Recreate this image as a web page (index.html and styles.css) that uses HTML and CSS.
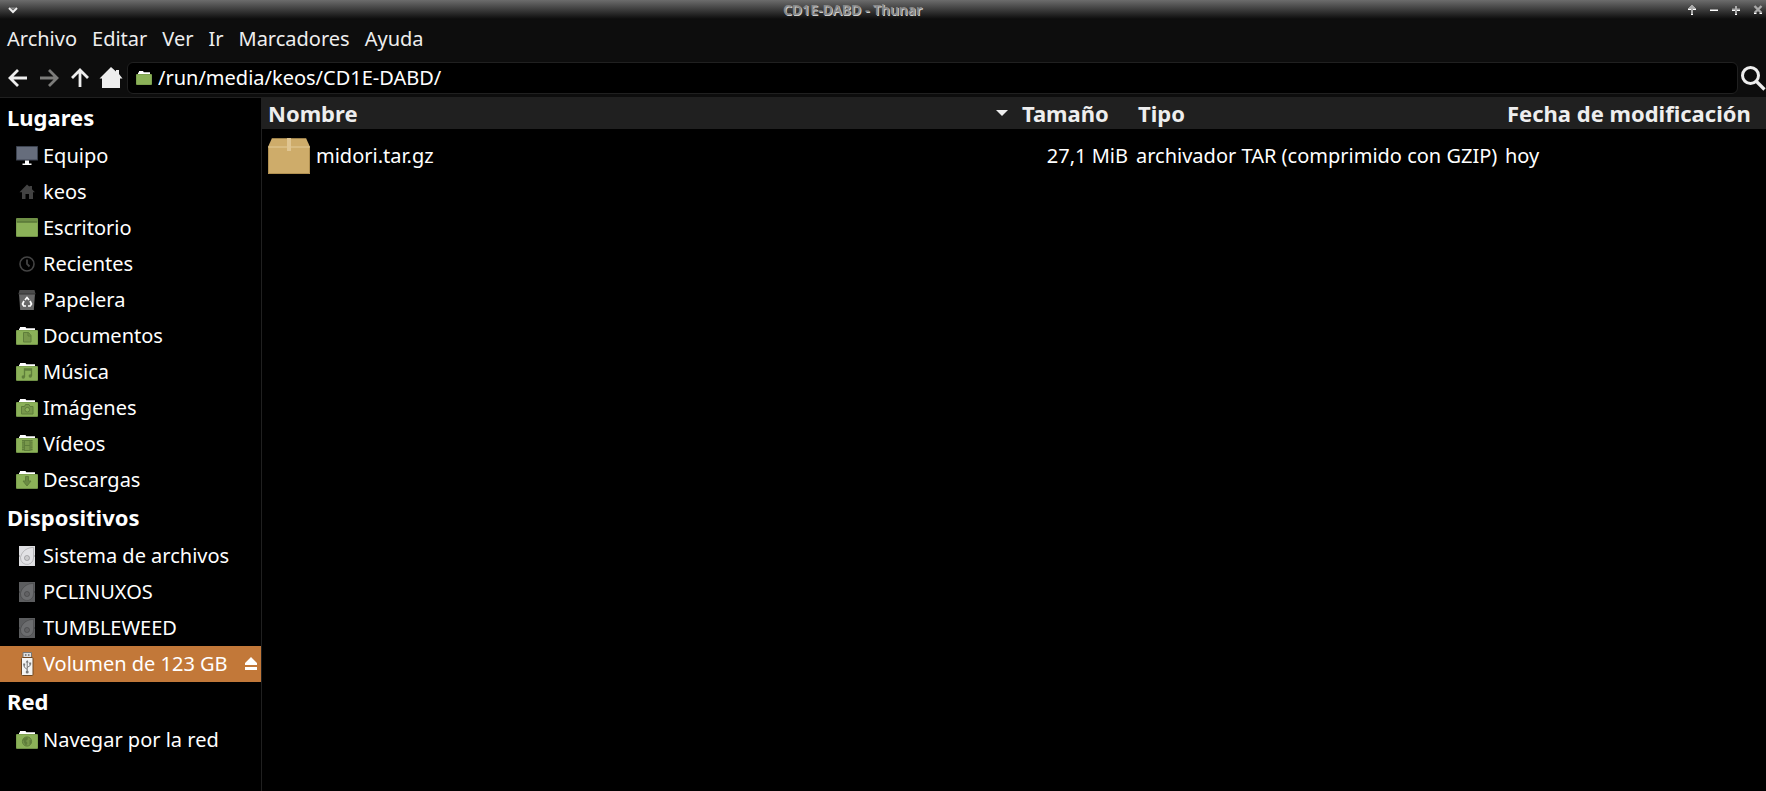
FILE: index.html
```html
<!DOCTYPE html>
<html lang="es">
<head>
    <meta charset="UTF-8">
    <meta name="viewport" content="width=device-width, initial-scale=1.0">
    <title>CD1E-DABD - Thunar</title>
    <link rel="stylesheet" href="styles.css">
</head>
<body>
    <!-- Shared icon shapes -->
    <svg class="defs" aria-hidden="true">
        <symbol id="folder" viewBox="0 0 24 24">
            <path d="M4 7V4.500h1V3h5.500l.8 1.200H20V7z" fill="#fff"/>
            <rect x="1" y="6" width="22" height="15" rx="1" fill="#6f9046"/>
            <rect x="1.500" y="6.500" width="21" height="13.500" rx=".6" fill="#8bb158"/>
        </symbol>
        <symbol id="drive" viewBox="0 0 24 24">
            <rect x="4" y="2" width="16" height="20" fill="currentColor"/>
            <path d="M18.500 3.500v10.500a6.500 6.500 0 1 1-12-3.500c1.800-3.600 5.500-7 12-7z" fill="#fff" fill-opacity=".1" stroke="#000" stroke-opacity=".18"/>
            <circle cx="12" cy="14" r="2.600" fill="#000" fill-opacity=".1" stroke="#000" stroke-opacity=".2"/>
            <path d="M4 12h1M19 12h1" stroke="#000" stroke-opacity=".4"/>
        </symbol>
    </svg>

    <div class="window">
        <header class="titlebar">
            <button class="title-button" aria-label="Menú de la ventana">
                <svg width="12" height="12" viewBox="0 0 12 12"><path d="M2 4l4 4 4-4" fill="none" stroke="#eee" stroke-width="2"/><path d="M3 3.500h6L6 6z" fill="#888"/></svg>
            </button>
            <h1 class="title">CD1E-DABD - Thunar</h1>
            <div class="title-controls">
                <button class="title-button" aria-label="Enrollar"><svg width="12" height="12" viewBox="0 0 12 12"><path d="M5 1h2v1h1v1h1v1h1v1H7v5H5V5H2V4h1V3h1V2h1z" fill="#aaa"/><path d="M2 5.500h3M7 5.500h3M5 10.500h2" stroke="#fff"/></svg></button>
                <button class="title-button" aria-label="Minimizar"><svg width="12" height="12" viewBox="0 0 12 12"><path d="M2 5.500h8" stroke="#999"/><path d="M2 6.500h8" stroke="#fff"/></svg></button>
                <button class="title-button" aria-label="Maximizar"><svg width="12" height="12" viewBox="0 0 12 12"><path d="M2 5.500h8M6 2v8" stroke="#aaa" stroke-width="2"/><path d="M2 6.500h3M7 6.500h3M5 10.500h2" stroke="#fff"/></svg></button>
                <button class="title-button" aria-label="Cerrar"><svg width="12" height="12" viewBox="0 0 12 12"><path d="M2.500 2l7 7M9.500 2l-7 7" stroke="#aaa" stroke-width="2.400"/><path d="M2 9.500h2.500M7.500 9.500H10" stroke="#fff"/></svg></button>
            </div>
        </header>

        <nav class="menubar">
            <button>Archivo</button>
            <button>Editar</button>
            <button>Ver</button>
            <button>Ir</button>
            <button>Marcadores</button>
            <button>Ayuda</button>
        </nav>

        <div class="toolbar">
            <button aria-label="Atrás"><svg width="24" height="24" viewBox="0 0 24 24"><path d="M21 12H5M12 4l-8 8 8 8" fill="none" stroke="#eee" stroke-width="2.800"/></svg></button>
            <button aria-label="Adelante" disabled><svg width="24" height="24" viewBox="0 0 24 24"><path d="M3 12h16M12 4l8 8-8 8" fill="none" stroke="#7c7c7a" stroke-width="2.800"/></svg></button>
            <button aria-label="Subir"><svg width="24" height="24" viewBox="0 0 24 24"><path d="M12 21V5M4 12l8-8 8 8" fill="none" stroke="#eee" stroke-width="2.800"/></svg></button>
            <button aria-label="Carpeta personal"><svg width="24" height="24" viewBox="0 0 24 24"><path d="M12 1l5 4.500V4h3v4l3.500 4.500H21V22H3v-9.500H.5z" fill="#eee"/></svg></button>
            <div class="location">
                <svg width="16" height="16" viewBox="0 0 16 16"><path d="M2 5V2.500h1V1h4l.8 1.200H14V5z" fill="#fff"/><rect y="4" width="16" height="11" rx="1" fill="#6f9046"/><rect x=".5" y="4.500" width="15" height="10" rx=".5" fill="#8bb158"/></svg>
                <input type="text" value="/run/media/keos/CD1E-DABD/" aria-label="Ubicación">
            </div>
            <button class="search" aria-label="Buscar"><svg width="26" height="26" viewBox="0 0 26 26"><circle cx="10.500" cy="10.500" r="8" fill="none" stroke="#eee" stroke-width="3"/><path d="M16.500 16.500l8 8" stroke="#eee" stroke-width="3.200"/></svg></button>
        </div>

        <div class="content">
            <aside class="sidebar">
                <h2>Lugares</h2>
                <a href="#" class="place">
                    <svg class="icon"><rect x="1" y="2" width="22" height="14.500" rx=".5" fill="#3c4350"/><rect x="2" y="3" width="20" height="12.500" fill="#666d7c"/><path d="M10 16.500h4v3h2.500V21h-9v-1.500H10z" fill="#fff"/></svg>
                    <span>Equipo</span>
                </a>
                <a href="#" class="place">
                    <svg class="icon"><path d="M12 4.500l2.500 2.300V6H17v3.200l3 3h-2V19h-4v-5h-3.500v5H7v-6.800H4.500z" fill="#424242"/></svg>
                    <span>keos</span>
                </a>
                <a href="#" class="place">
                    <svg class="icon"><rect x="1" y="2" width="22" height="19" rx="1" fill="#6f9046"/><path d="M1.500 6.500h21v13.500h-21z" fill="#8bb158"/><path d="M2 6h20" stroke="#4f6a30"/></svg>
                    <span>Escritorio</span>
                </a>
                <a href="#" class="place">
                    <svg class="icon"><circle cx="12" cy="12" r="7" fill="none" stroke="#444" stroke-width="1.600"/><path d="M12 7.500V12l2.500 2.500" fill="none" stroke="#444" stroke-width="1.800"/></svg>
                    <span>Recientes</span>
                </a>
                <a href="#" class="place">
                    <svg class="icon"><path d="M4 6h16l-1.200 16H5.200z" fill="#686868"/><path d="M4.500 2h15l1 4h-17z" fill="#4c4c4c"/><path d="M3.500 6h17" stroke="#333"/><path d="M10 12l2-2.500 2 2.500M15 13l1.500 3-1.300 2H13M11 18H8.700l-1.200-2L9 13" fill="none" stroke="#fff" stroke-width="1.700"/></svg>
                    <span>Papelera</span>
                </a>
                <a href="#" class="place">
                    <svg class="icon"><use href="#folder"/><path d="M8.500 8.500h5l2.500 3v6.500H8.500z" fill="#78984b" stroke="#5f7e3b"/><path d="M13 8.500V12h3" fill="none" stroke="#5f7e3b"/></svg>
                    <span>Documentos</span>
                </a>
                <a href="#" class="place">
                    <svg class="icon"><use href="#folder"/><path d="M9.500 17V9h7v7M9.500 10h7" fill="none" stroke="#5f7e3b" stroke-width="1.300"/><circle cx="8.300" cy="17" r="1.700" fill="#5f7e3b"/><circle cx="15.300" cy="16" r="1.700" fill="#5f7e3b"/></svg>
                    <span>Música</span>
                </a>
                <a href="#" class="place">
                    <svg class="icon"><use href="#folder"/><path d="M6.500 10.500h3l1-2h3.500l1 2h3v7.500H6.500z" fill="#78984b" stroke="#5f7e3b"/><circle cx="12.300" cy="13.700" r="2.300" fill="#8bb158" stroke="#5f7e3b"/></svg>
                    <span>Imágenes</span>
                </a>
                <a href="#" class="place">
                    <svg class="icon"><use href="#folder"/><path d="M7 8h10.500v11H7z" fill="#78984b"/><path d="M8 8v11M16.500 8v11" stroke="#5f7e3b" stroke-width="2" stroke-dasharray="1.200 1"/><path d="M9.500 8v11M15 8v11M9.500 13.500H15M9.500 8.500H15M9.500 18.500H15" stroke="#5f7e3b"/></svg>
                    <span>Vídeos</span>
                </a>
                <a href="#" class="place">
                    <svg class="icon"><use href="#folder"/><path d="M10.500 8.500h3V13H16l-4 5-4-5h2.500z" fill="#6b8b43" stroke="#5f7e3b"/></svg>
                    <span>Descargas</span>
                </a>

                <h2>Dispositivos</h2>
                <a href="#" class="place">
                    <svg class="icon drive"><use href="#drive"/></svg>
                    <span>Sistema de archivos</span>
                </a>
                <a href="#" class="place">
                    <svg class="icon drive unmounted"><use href="#drive"/></svg>
                    <span>PCLINUXOS</span>
                </a>
                <a href="#" class="place">
                    <svg class="icon drive unmounted"><use href="#drive"/></svg>
                    <span>TUMBLEWEED</span>
                </a>
                <div class="place selected">
                    <a href="#">
                        <svg class="icon"><path d="M8 .5h8.500V6H8z" fill="#ddd" stroke="#777"/><path d="M10 3h1.500M13 3h1.500" stroke="#666" stroke-width="1.500"/><rect x="6.500" y="5.500" width="11.500" height="18" rx="1" fill="#f4f4f4" stroke="#704822"/><path d="M12.200 9v10M12.200 17.500l-3-2.500v-2M12.200 15.500l3-2v-2" fill="none" stroke="#777"/><path d="M12.200 8l1.500 2.500h-3zM8.200 11.500h2v2h-2zM14.200 10.500h2v2h-2z" fill="#777"/><circle cx="12.200" cy="20" r="1.500" fill="#777"/></svg>
                        <span>Volumen de 123 GB</span>
                    </a>
                    <button class="eject" aria-label="Expulsar"><svg width="12" height="14" viewBox="0 0 12 14"><path d="M6 0l6 6v2H0V6zM0 10h12v3H0z" fill="#fff"/></svg></button>
                </div>

                <h2>Red</h2>
                <a href="#" class="place">
                    <svg class="icon"><use href="#folder"/><circle cx="12" cy="13.500" r="4.600" fill="#78984b" stroke="#5f7e3b"/><path d="M8 11l4-2 1 2-2 2 1.500 2-1.500 3-2-3.500zM14.500 12l2 .5-.5 3-1.500 1z" fill="#5f7e3b"/></svg>
                    <span>Navegar por la red</span>
                </a>
            </aside>

            <main class="files">
                <table>
                    <colgroup>
                        <col>
                        <col class="col-size">
                        <col class="col-type">
                        <col class="col-date">
                    </colgroup>
                    <thead>
                        <tr>
                            <th><button>Nombre <svg width="12" height="6" viewBox="0 0 12 6"><path d="M0 0h12L6 6z" fill="#eee"/></svg></button></th>
                            <th><button>Tamaño</button></th>
                            <th><button>Tipo</button></th>
                            <th><button>Fecha de modificación</button></th>
                        </tr>
                    </thead>
                    <tbody>
                        <tr>
                            <td>
                                <div class="file-name">
                                    <svg width="42" height="38" viewBox="0 0 42 38"><path d="M4 1h34l4 9v27H0V10z" fill="#ceac6a"/><path d="M4 1.500h34" stroke="#9c8049"/><path d="M.5 10v26.500h41V10" fill="none" stroke="#b08f50"/><path d="M0 10h42" stroke="#e3cb98"/><path d="M19 1h4v13h-4z" fill="#dfc592"/></svg>
                                    <span>midori.tar.gz</span>
                                </div>
                            </td>
                            <td class="size">27,1 MiB</td>
                            <td>archivador TAR (comprimido con GZIP)</td>
                            <td>hoy</td>
                        </tr>
                    </tbody>
                </table>
            </main>
        </div>
    </div>
</body>
</html>
```
FILE: styles.css
```css
* {
    box-sizing: border-box;
}
body {
    margin: 0;
    background-color: #000;
    color: #fff;
    font-family: "Noto Sans", sans-serif;
    font-size: 20px;
    line-height: 28px;
}
button {
    padding: 0;
    border: none;
    background: none;
    color: #eee;
    font: inherit;
    cursor: pointer;
}
svg {
    display: block;
    flex: none;
}
a {
    color: inherit;
    text-decoration: none;
}
.defs {
    display: none;
}
.window {
    display: flex;
    flex-direction: column;
    min-height: 100vh;
}

/* Title bar */
.titlebar {
    display: flex;
    align-items: center;
    height: 20px;
    padding: 0 2px 0 7px;
    background: linear-gradient(#6c6c6c, #0d0d0d 19px);
}
.title {
    flex: 1;
    margin: 0;
    font-size: 14px;
    font-weight: 600;
    line-height: 20px;
    text-align: center;
    color: #888;
    text-shadow: 1px 1px 0 #ccc;
}
.title-controls {
    display: flex;
    gap: 10px;
}

/* Menu and toolbar */
.menubar {
    display: flex;
    gap: 15px;
    padding: 5px 7px;
    background-color: #0d0d0d;
}
.toolbar {
    display: flex;
    align-items: center;
    gap: 7px;
    height: 40px;
    padding-left: 6px;
    background-color: #0d0d0d;
    border-bottom: 1px solid #202020;
}
.location {
    display: flex;
    flex: 1;
    align-items: center;
    gap: 6px;
    height: 32px;
    margin-left: -3px;
    padding: 0 8px;
    background-color: #000;
    border: 1px solid #202020;
    border-radius: 6px;
}
.location input {
    flex: 1;
    min-width: 0;
    padding: 0;
    border: none;
    outline: none;
    background: none;
    color: #fff;
    font: inherit;
}
.search {
    margin-left: -5px;
}

/* Side pane */
.content {
    display: flex;
    flex: 1;
}
.sidebar {
    width: 262px;
    border-right: 1px solid #202020;
}
.sidebar h2 {
    margin: 0;
    padding: 0 7px 2px;
    font-size: 22px;
    line-height: 38px;
}
.place {
    display: flex;
    align-items: center;
    gap: 4px;
    height: 36px;
    padding: 0 4px 0 15px;
}
.place a {
    display: flex;
    flex: 1;
    align-items: center;
    gap: 4px;
}
.selected {
    background-color: #c27839;
}
.icon {
    width: 24px;
    height: 24px;
}
.drive {
    color: #dfdfe2;
}
.unmounted {
    color: #5c5d5f;
}

/* File list */
.files {
    flex: 1;
}
table {
    width: 100%;
    border-collapse: collapse;
    table-layout: fixed;
}
.col-size {
    width: 116px;
}
.col-type {
    width: 369px;
}
.col-date {
    width: 266px;
}
th {
    height: 31px;
    padding: 0 7px 2px;
    background-color: #202020;
    text-align: left;
}
th button {
    display: flex;
    align-items: center;
    justify-content: space-between;
    width: 100%;
    font-size: 22px;
    font-weight: bold;
    white-space: nowrap;
}
td {
    height: 54px;
    padding: 0 5px;
    white-space: nowrap;
}
td:first-child,
th:first-child {
    padding-left: 6px;
}
.size {
    padding-right: 3px;
    text-align: right;
}
.file-name {
    display: flex;
    align-items: center;
    gap: 6px;
}
```
